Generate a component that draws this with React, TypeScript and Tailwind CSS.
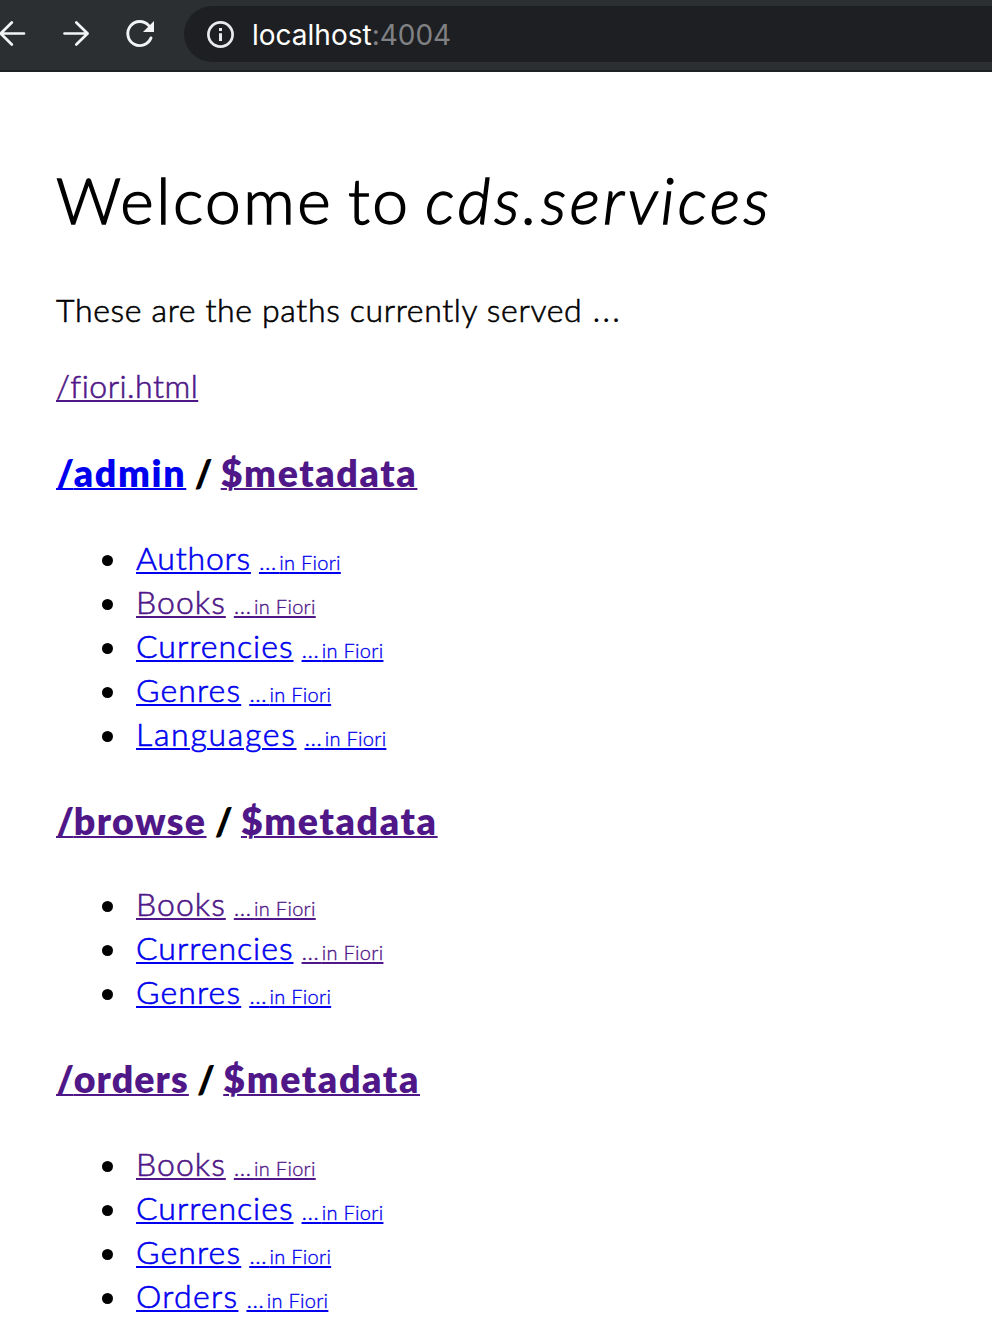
type Entity = { name: string; tracking: string; visited?: boolean; fioriVisited?: boolean };
type Service = { name: string; tracking: string; visited?: boolean; spacing: string; entities: Entity[] };

const authors: Entity = { name: "Authors", tracking: "tracking-[0.81px]" };
const books: Entity = { name: "Books", tracking: "tracking-[1.06px]", visited: true, fioriVisited: true };
const currencies: Entity = { name: "Currencies", tracking: "tracking-[1.01px]" };
const genres: Entity = { name: "Genres", tracking: "tracking-[1.15px]" };
const languages: Entity = { name: "Languages", tracking: "tracking-[1.71px]" };
const orders: Entity = { name: "Orders", tracking: "tracking-[1.33px]" };

const services: Service[] = [
  { name: "admin", tracking: "tracking-[1.67px]", spacing: "mt-[40px] mb-[38px]", entities: [authors, books, currencies, genres, languages] },
  {
    name: "browse", tracking: "tracking-[1.43px]", visited: true, spacing: "mt-[40px] mb-[36px]",
    entities: [books, { ...currencies, fioriVisited: true }, genres],
  },
  { name: "orders", tracking: "tracking-[1.1px]", visited: true, spacing: "mt-[40px] mb-[38px]", entities: [books, currencies, genres, orders] },
];

const linkColor = (visited?: boolean) => (visited ? "text-[#4f1787]" : "text-[#0000ee]");
const underline = "underline decoration-2";

function Toolbar() {
  return (
    <header className="flex h-[72px] items-start border-b-2 border-[#1f2023] bg-[#2c2f32] pt-[6px]">
      <svg className="h-[56px] w-[184px] shrink-0" viewBox="0 6 184 56" fill="none" stroke="#f1f3f4" strokeWidth="2.7">
        <path d="M24 33.5H0.5M11.8 22.5L0.7 33.5L11.8 44.5" strokeLinecap="round" strokeLinejoin="round" />
        <path d="M64.5 33.5H87.5M76.3 22.5L87.6 33.5L76.3 44.5" strokeLinecap="round" strokeLinejoin="round" />
        <path d="M148.8 25.6A12 12 0 1 0 151 37.9" strokeWidth="2.9" strokeLinecap="round" />
        <path d="M154 21V32H143Z" fill="#f1f3f4" stroke="none" />
      </svg>
      <div className="flex h-[56px] flex-1 items-center rounded-l-full bg-[#1e1f22] pl-[22px]">
        <svg className="h-[29px] w-[29px]" viewBox="0 0 29 29" fill="none">
          <circle cx="14.5" cy="14.5" r="12.1" stroke="#e8eaed" strokeWidth="2.7" />
          <path d="M13 8H16V11H13ZM13 13.2H16V21H13Z" fill="#e8eaed" />
        </svg>
        <div className="ml-[17px] pt-[2px] font-['Inter',sans-serif] text-[28px] leading-[54px] text-white">
          localhost<span className="text-[#808184]">:4004</span>
        </div>
      </div>
    </header>
  );
}

function ServiceSection({ service }: { service: Service }) {
  return (
    <section>
      <h3 className={`flex h-[50px] text-[37.5px] leading-[50px] font-extrabold ${service.spacing}`}>
        <a href="#" className={`${underline} underline-offset-[1px] [text-decoration-skip-ink:none] ${service.tracking} ${linkColor(service.visited)}`}>
          <span className="tracking-[-0.3px]">/</span>{service.name}
        </a>
        <span className="w-[34.4px] text-center">/</span>
        <a href="#" className={`${underline} tracking-[1.65px] underline-offset-[1px] ${linkColor(true)}`}>$metadata</a>
      </h3>
      <ul className="list-none">
        {service.entities.map((e) => (
          <li key={e.name} className="flex h-[44px] items-baseline pl-[46px] text-[32px] leading-[44px]">
            <span className="mr-[23px] h-[11px] w-[11px] -translate-y-[4px] rounded-full bg-black" />
            <a href="#" className={`${underline} underline-offset-[2px] [-webkit-text-stroke:0.6px] ${e.tracking} ${linkColor(e.visited)}`}>
              {e.name}
            </a>
            <a href="#" className={`${underline} ml-[8px] text-[20px] tracking-[0.3px] underline-offset-[2px] [-webkit-text-stroke:0.35px] ${linkColor(e.fioriVisited)}`}>
              <span className="text-[24px] leading-none tracking-[2.9px]">…</span>in Fiori
            </a>
          </li>
        ))}
      </ul>
    </section>
  );
}

export default function App() {
  return (
    <div className="h-[1342px] overflow-hidden bg-white text-black">
      <Toolbar />
      <main className="flex flex-col px-[56px] pt-[84px] font-['Lato',sans-serif] font-light">
        <h1 className="h-[88px] text-[64px] leading-[88px] tracking-[2.5px] whitespace-nowrap [-webkit-text-stroke:1.4px] [word-spacing:-5px]">
          Welcome to <i className="tracking-[3.5px]">cds.services</i>
        </h1>
        <p className="mt-[43px] h-[45px] text-[32px] leading-[44px] tracking-[0.66px] [-webkit-text-stroke:0.6px]">
          These are the paths currently served <span className="text-[40px] leading-none tracking-normal [-webkit-text-stroke:0px]">…</span>
        </p>
        <p className="mt-[32px] h-[44px] text-[32px] leading-[44px] tracking-[0.5px] [-webkit-text-stroke:0.6px]">
          <a href="#" className={`${underline} underline-offset-[2px] [text-decoration-skip-ink:none] ${linkColor(true)}`}>/fiori.html</a>
        </p>
        {services.map((s) => (
          <ServiceSection key={s.name} service={s} />
        ))}
      </main>
    </div>
  );
}
